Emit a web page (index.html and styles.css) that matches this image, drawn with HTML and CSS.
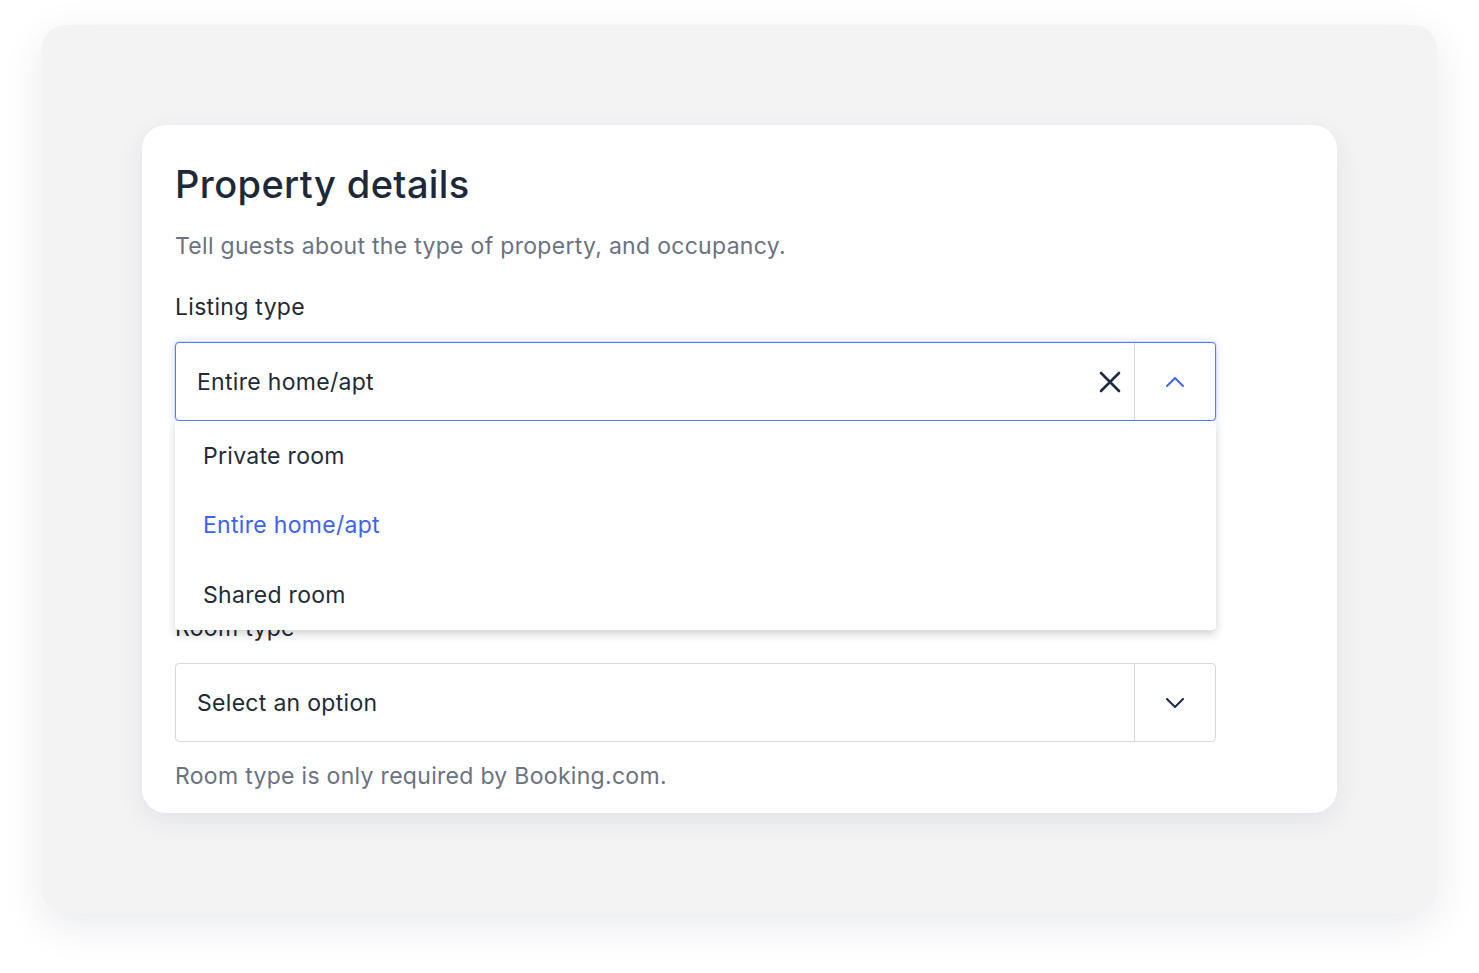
FILE: index.html
```html
<!DOCTYPE html>
<html>
  <head>
    <meta charset="utf-8">
    <title>Property details</title>
    <link rel="stylesheet" href="styles.css">
  </head>
  <body>
    <div class='panel'>
      <div class='card'>
        <h1 class='title'>Property details</h1>
        <p class='subtitle'>Tell guests about the type of property, and occupancy.</p>

        <!-- Listing type -->
        <div class='field'>
          <label class='field-label'>Listing type</label>
          <div class='select select-open'>
            <span class='select-value'>Entire home/apt</span>
            <span class='select-clear'>
              <svg width='22' height='22' viewBox='0 0 22 22'><path d='M2 2 L20 20 M20 2 L2 20' stroke='#1e2b45' stroke-width='2.6' fill='none' stroke-linecap='round'/></svg>
            </span>
            <span class='select-toggle'>
              <svg width='20' height='12' viewBox='0 0 20 12'><path d='M2 10 L10 2 L18 10' stroke='#4266f6' stroke-width='2' fill='none' stroke-linecap='round' stroke-linejoin='round'/></svg>
            </span>
            <div class='menu'>
              <div class='menu-item'>Private room</div>
              <div class='menu-item menu-item-selected'>Entire home/apt</div>
              <div class='menu-item'>Shared room</div>
            </div>
          </div>
        </div>

        <!-- Room type -->
        <div class='field field-room'>
          <label class='field-label'>Room type</label>
          <div class='select'>
            <span class='select-value'>Select an option</span>
            <span class='select-toggle'>
              <svg width='20' height='12' viewBox='0 0 20 12'><path d='M2 2 L10 10 L18 2' stroke='#1e2b45' stroke-width='2' fill='none' stroke-linecap='round' stroke-linejoin='round'/></svg>
            </span>
          </div>
          <p class='help'>Room type is only required by Booking.com.</p>
        </div>
      </div>
    </div>
  </body>
</html>
```

FILE: styles.css
```css
* {
  margin: 0;
  padding: 0;
  box-sizing: border-box;
  font-family: Inter, 'Noto Sans', sans-serif;
}
body {
  background-color: white;
  padding: 25px 42px 60px 42px;
}
.panel {
  background-color: #f3f3f4;
  border-radius: 24px;
  padding: 100px;
  box-shadow: 0 12px 40px rgba(40, 50, 90, 0.10);
}
.card {
  background-color: white;
  border-radius: 24px;
  padding: 36px 121px 23px 33px;
  box-shadow: 0 8px 24px rgba(40, 50, 90, 0.08);
}
.title {
  font-size: 38px;
  line-height: 46px;
  font-weight: 500;
  color: #1d2838;
  letter-spacing: 0.4px;
}
.subtitle {
  margin-top: 23px;
  font-size: 23px;
  line-height: 32px;
  color: #6b7280;
  letter-spacing: 0.3px;
}
.field {
  margin-top: 31px;
}
.field-room {
  margin-top: 193px;
}
.field-label {
  display: block;
  font-size: 23px;
  line-height: 28px;
  color: #1f2a37;
  letter-spacing: 0.3px;
  margin-bottom: 21px;
}
.select {
  position: relative;
  display: flex;
  align-items: center;
  height: 79px;
  border: 1px solid #d7d9de;
  border-radius: 4px;
  background-color: white;
}
.select-open {
  border-color: #5b7cfa;
  box-shadow: 0 0 0 1px rgba(91, 124, 250, 0.15), 0 0 8px rgba(91, 124, 250, 0.25);
}
.select-value {
  flex-grow: 1;
  padding-left: 21px;
  font-size: 23px;
  color: #1f2a37;
  letter-spacing: 0.3px;
}
.select-clear {
  display: flex;
  padding-right: 13px;
}
.select-toggle {
  display: flex;
  align-items: center;
  justify-content: center;
  width: 81px;
  height: 100%;
  border-left: 1px solid #d7d9de;
}
.menu {
  position: absolute;
  top: 78px;
  left: -1px;
  right: -1px;
  background-color: white;
  border-radius: 0 0 4px 4px;
  box-shadow: 0 4px 10px rgba(0, 0, 0, 0.18);
  z-index: 2;
}
.menu-item {
  height: 69.5px;
  display: flex;
  align-items: center;
  padding-left: 28px;
  font-size: 23px;
  color: #222c38;
  letter-spacing: 0.3px;
}
.menu-item-selected {
  color: #3d63f5;
}
.help {
  margin-top: 20px;
  font-size: 23px;
  line-height: 28px;
  color: #6b7280;
  letter-spacing: 0.3px;
}
```
